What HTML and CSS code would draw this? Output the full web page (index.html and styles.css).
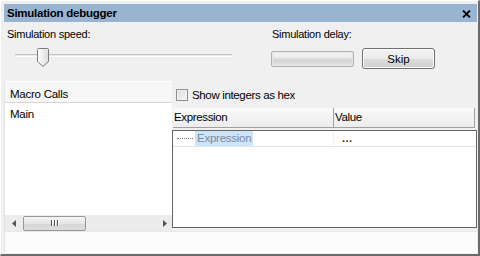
FILE: index.html
```html
<!DOCTYPE html>
<html>
<head>
<meta charset="utf-8">
<link rel="stylesheet" href="styles.css">
</head>
<body>
<div class="window">
  <div class="titlebar">
    <span class="title">Simulation debugger</span>
    <svg class="close" width="9" height="8" viewBox="0 0 9 8"><path d="M1 0.5 L8 7.5 M8 0.5 L1 7.5" stroke="#000" stroke-width="1.8"/></svg>
  </div>
  <div class="top">
    <div class="speed">
      <div class="label">Simulation speed:</div>
      <div class="slider">
        <div class="track"></div>
        <svg class="thumb" width="12" height="19" viewBox="0 0 12 19"><path d="M0.5 1.5 Q0.5 0.5 1.5 0.5 L10.5 0.5 Q11.5 0.5 11.5 1.5 L11.5 13.5 L6 18.5 L0.5 13.5 Z" fill="url(#tg)" stroke="#7a7a7a"/><defs><linearGradient id="tg" x1="0" x2="1" y1="0" y2="0"><stop offset="0" stop-color="#fdfdfd"/><stop offset="1" stop-color="#dcdcdc"/></linearGradient></defs></svg>
      </div>
    </div>
    <div class="delay">
      <div class="label">Simulation delay:</div>
      <div class="delay-row">
        <div class="progress"><div class="progress-in"></div></div>
        <button class="btn">Skip</button>
      </div>
    </div>
  </div>
  <div class="main">
    <div class="calls">
      <div class="calls-head">Macro Calls</div>
      <div class="calls-list"><div class="call">Main</div></div>
      <div class="hscroll">
        <svg class="arr" width="4" height="7" viewBox="0 0 4 7"><path d="M4 0 L0 3.5 L4 7 Z" fill="#555"/></svg>
        <div class="hthumb"><span class="grip"></span><span class="grip"></span><span class="grip"></span></div>
        <div class="hspace"></div>
        <svg class="arr" width="4" height="7" viewBox="0 0 4 7"><path d="M0 0 L4 3.5 L0 7 Z" fill="#555"/></svg>
      </div>
    </div>
    <div class="watch">
      <label class="check"><span class="box"></span>Show integers as hex</label>
      <div class="grid-head">
        <div class="col-expr">Expression</div>
        <div class="col-val">Value</div>
      </div>
      <div class="grid-body">
        <div class="row">
          <div class="cell-expr"><span class="dots"></span><span class="hl">Expression</span></div>
          <div class="cell-val">...</div>
        </div>
      </div>
    </div>
  </div>
  <div class="status"></div>
</div>
</body>
</html>
```
FILE: styles.css
```css
* { box-sizing: border-box; }
html, body { margin: 0; padding: 0; background: #f0f0f0; }
body { font-family: "Liberation Sans", Arial, sans-serif; font-size: 11px; letter-spacing: -0.25px; color: #000; }

.window {
  width: 480px; height: 256px;
  background: #f0f0f0;
  border-top: 1px solid #fff; border-left: 1px solid #fff;
  border-right: 2px solid #6b6b6b; border-bottom: 2px solid #6b6b6b;
  padding: 3px 1px 1px 3px;
  display: flex; flex-direction: column;
}
.titlebar {
  height: 18px; flex: none;
  background: #99b4d1;
  display: flex; align-items: center; justify-content: space-between;
  padding: 0 6px 0 3px;
}
.title { font-weight: bold; font-size: 11.5px; letter-spacing: -0.25px; }
.close { display: block; margin-top: 1px; }

.top { height: 59px; flex: none; display: flex; }
.label { font-size: 11px; line-height: 14px; }
.speed { width: 266px; padding: 5px 0 0 3px; }
.slider { position: relative; height: 24px; margin-top: 7px; }
.track { position: absolute; left: 8px; width: 217px; top: 6px; height: 3px; background: #e7eaea; border: 1px solid #b5b5b5; border-width: 1px 0 1px 0; border-top-color: #c3c3c3; border-bottom-color: #fff; }
.thumb { position: absolute; left: 30px; top: 0; display: block; }
.delay { padding: 5px 0 0 1px; }
.delay .label { padding-left: 1px; }
.delay-row { display: flex; align-items: center; gap: 8px; margin-top: 7px; }
.progress { width: 83px; height: 16px; border: 1px solid #b2b2b2; border-radius: 2px; background: #e6e6e6; padding: 1px; }
.progress-in { height: 100%; background: linear-gradient(#f3f3f3 0%, #ececec 35%, #d8d8d8 50%, #d6d6d6 75%, #e6e6e6 100%); border-radius: 1px; }
.btn {
  width: 73px; height: 21px; margin-left: 0;
  font: 11.5px "Liberation Sans", Arial, sans-serif;
  border: 1px solid #707070; border-radius: 3px;
  background: linear-gradient(#f2f2f2 0%, #ebebeb 50%, #dddddd 51%, #cfcfcf 100%);
  box-shadow: inset 0 0 0 1px #fcfcfc;
  padding: 0; color: #000;
}

.main { height: 150px; flex: none; display: flex; }
.calls { width: 168px; flex: none; display: flex; flex-direction: column; background: #fff; border-left: 1px solid #e3e3e3; }
.calls-head { height: 22px; flex: none; background: #f7f7f7; border-top: 1px solid #fff; border-bottom: 1px solid #d5d5d5; padding: 5px 0 0 5px; line-height: 14px; font-size: 11.5px; }
.calls-list { flex: 1; padding: 4px 0 0 5px; font-size: 11.5px; }
.call { line-height: 14px; }
.hscroll { height: 16px; flex: none; background: #ececec; display: flex; align-items: center; padding: 0 5px 0 7px; }
.hthumb { width: 63px; height: 15px; margin-left: 7px; border: 1px solid #979797; border-radius: 2px; background: linear-gradient(#f6f6f6, #e4e4e4 50%, #d8d8d8 51%, #dcdcdc); display: flex; align-items: center; justify-content: center; gap: 1px; }
.grip { width: 1px; height: 6px; background: #555; box-shadow: 1px 0 0 #fff; margin: 0 1px 0 0; }
.hspace { flex: 1; }
.arr { display: block; }

.watch { flex: 1; display: flex; flex-direction: column; padding: 0 0 3px 0; }
.check { height: 27px; flex: none; display: flex; align-items: center; padding: 0 0 0 4px; gap: 4px; font-size: 11.5px; letter-spacing: -0.35px; }
.box { width: 12px; height: 12px; border: 1px solid #8e8f8f; background: linear-gradient(135deg, #dcdcdc, #f6f6f6); box-shadow: inset 0 0 0 1px #f4f4f4; }
.grid-head { height: 20px; flex: none; display: flex; margin: 0 2px 0 1px; border-bottom: 1px solid #a0a0a0; border-right: 1px solid #a0a0a0; }
.grid-head > div { line-height: 19px; padding-left: 1px; background: linear-gradient(#fafafa, #ececec); letter-spacing: -0.35px; font-size: 11.5px; }
.col-expr { width: 161px; border-right: 1px solid #a0a0a0; }
.col-val { flex: 1; }
.grid-body { flex: 1; margin-top: 2px; border: 1px solid #646464; background: #fff; }
.row { height: 16px; display: flex; border-bottom: 1px solid #e3e3e3; }
.cell-expr { width: 161px; display: flex; align-items: center; padding-left: 4px; border-right: 1px solid #f0f0f0; }
.dots { width: 16px; border-top: 1px dotted #7a7a7a; margin-right: 2px; }
.hl { background: #cce4f7; color: #7d8aa3; padding: 0 2px; line-height: 15px; font-size: 11.5px; }
.cell-val { padding-left: 8px; line-height: 15px; font-weight: bold; color: #3a2a00; letter-spacing: 0.5px; }

.status { flex: 1; background: #fbfbfb; border-top: 1px solid #e8e8e8; border-left: 1px solid #e3e3e3; }
```
